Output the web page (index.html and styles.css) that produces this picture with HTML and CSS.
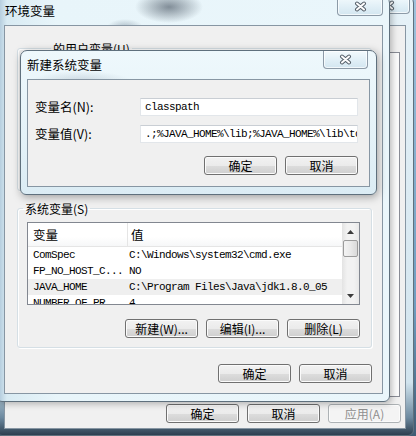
FILE: index.html
```html
<!DOCTYPE html>
<html lang="zh-CN">
<head>
  <meta charset="UTF-8" />
  <title>环境变量</title>
  <link rel="stylesheet" href="styles.css">
</head>
<body>
  <!-- 系统属性 (behind) -->
  <div class="win win-bg">
    <div class="titlebar">
      <span class="title">系统属性</span>
      <span class="close close-bg">
        <svg width="13" height="11" viewBox="0 0 13 11"><path class="x-out" d="M3 2.5 L10 8.5 M10 2.5 L3 8.5"/><path class="x-in" d="M3 2.5 L10 8.5 M10 2.5 L3 8.5"/></svg>
      </span>
    </div>
    <div class="client bg-client">
      <div class="tabpanel"></div>
      <div class="btnrow">
        <button class="btn">确定</button>
        <button class="btn">取消</button>
        <button class="btn" disabled>应用(A)</button>
      </div>
    </div>
  </div>

  <!-- 环境变量 -->
  <div class="win win-env">
    <div class="titlebar">
      <span class="title">环境变量</span>
      <span class="close close-env">
        <svg width="13" height="11" viewBox="0 0 13 11"><path class="x-out" d="M3 2.5 L10 8.5 M10 2.5 L3 8.5"/><path class="x-in" d="M3 2.5 L10 8.5 M10 2.5 L3 8.5"/></svg>
      </span>
    </div>
    <div class="client env-client">
      <fieldset class="group group-user">
        <legend class="legend-user">的用户变量(U)</legend>
      </fieldset>

      <fieldset class="group group-sys">
        <legend>系统变量(S)</legend>
        <div class="listview">
          <div class="lv-main">
            <div class="lv-head">
              <div class="col1">变量</div>
              <div class="col2">值</div>
            </div>
            <div class="lv-row"><div class="col1">ComSpec</div><div class="col2">C:\Windows\system32\cmd.exe</div></div>
            <div class="lv-row"><div class="col1">FP_NO_HOST_C...</div><div class="col2">NO</div></div>
            <div class="lv-row hot"><div class="col1">JAVA_HOME</div><div class="col2">C:\Program Files\Java\jdk1.8.0_05</div></div>
            <div class="lv-row"><div class="col1">NUMBER_OF_PR...</div><div class="col2">4</div></div>
          </div>
          <div class="scrollbar">
            <div class="sb-arrow"><svg width="7" height="4" viewBox="0 0 7 4"><path d="M0 4 L3.5 0 L7 4 Z"/></svg></div>
            <div class="sb-thumb"></div>
            <div class="sb-track"></div>
            <div class="sb-arrow"><svg width="7" height="4" viewBox="0 0 7 4"><path d="M0 0 L3.5 4 L7 0 Z"/></svg></div>
          </div>
        </div>
        <div class="btnrow grp-btns">
          <button class="btn">新建(W)...</button>
          <button class="btn">编辑(I)...</button>
          <button class="btn">删除(L)</button>
        </div>
      </fieldset>

      <div class="btnrow env-btns">
        <button class="btn">确定</button>
        <button class="btn">取消</button>
      </div>
    </div>
  </div>

  <!-- 新建系统变量 (active) -->
  <div class="win win-new">
    <div class="titlebar">
      <span class="title">新建系统变量</span>
      <span class="close close-new">
        <svg width="13" height="11" viewBox="0 0 13 11"><path class="x-out" d="M3 2.5 L10 8.5 M10 2.5 L3 8.5"/><path class="x-in" d="M3 2.5 L10 8.5 M10 2.5 L3 8.5"/></svg>
      </span>
    </div>
    <div class="client new-client">
      <div class="form">
        <label>变量名(N):</label>
        <div class="textbox">classpath</div>
        <label>变量值(V):</label>
        <div class="textbox">.;%JAVA_HOME%\lib;%JAVA_HOME%\lib\tools.jar</div>
      </div>
      <div class="btnrow new-btns">
        <button class="btn">确定</button>
        <button class="btn">取消</button>
      </div>
    </div>
  </div>
</body>
</html>
```

FILE: styles.css
```css
* {
  box-sizing: border-box;
}

body {
  margin: 0;
  width: 416px;
  height: 436px;
  overflow: hidden;
  position: relative;
  font-family: "Noto Sans CJK SC", "Noto Sans", sans-serif;
  font-size: 12px;
  color: #000;
  background: linear-gradient(180deg, #9fc2dc 0%, #6f9dc0 70%, #3f5c74 100%);
}

/* ---- windows ---- */
.win {
  position: absolute;
  display: flex;
  flex-direction: column;
  border: 1px solid #5f707d;
  border-radius: 7px 7px 6px 6px;
  background:
    radial-gradient(ellipse 40px 14px at 170px 12px, rgba(70, 85, 100, 0.55), transparent),
    linear-gradient(180deg, #eef8fc 0%, #e2f1f8 40%, #d6e8f1 100%);
}

.win-bg {
  left: -4px;
  top: -4px;
  width: 418px;
  height: 440px;
  background: linear-gradient(180deg, #e6f2f8 0%, #d2e4ee 88%, #6d8aa0 96%, #2d3f50 100%);
}

.win-env {
  left: -4px;
  top: -4px;
  width: 394px;
  height: 406px;
  box-shadow: 2px 2px 6px rgba(0, 0, 0, 0.25);
  background:
    radial-gradient(ellipse 34px 16px at 172px 10px, rgba(60, 72, 86, 0.6), transparent),
    radial-gradient(ellipse 18px 8px at 128px 30px, rgba(70, 90, 110, 0.35), transparent),
    linear-gradient(90deg, #a8c2d6 0px, #d9ebf3 10px, #e8f5fa 60px, #eaf6fb 100%);
}

.win-new {
  left: 20px;
  top: 50px;
  width: 357px;
  height: 145px;
  box-shadow: 1px 2px 8px rgba(0, 0, 0, 0.35);
  background:
    radial-gradient(ellipse 50px 10px at 60px 30px, rgba(110, 130, 150, 0.25), transparent),
    linear-gradient(180deg, #eef8fc 0%, #e4f2f8 60%, #dbecf4 100%);
}

.titlebar {
  height: 28px;
  flex: none;
  display: flex;
  justify-content: space-between;
  align-items: flex-start;
}

.title {
  margin-top: 6px;
  line-height: 16px;
  font-size: 12.5px;
  color: #000;
}

.win-env .title {
  padding-left: 8px;
}

.win-new .title {
  padding-left: 6px;
}

.win-bg .title {
  padding-left: 8px;
}

.close {
  display: flex;
  align-items: center;
  justify-content: center;
  height: 19px;
  border: 1px solid #8c9aa7;
  border-top: none;
  border-radius: 0 0 4px 4px;
  background: linear-gradient(180deg, #f3fafd 0%, #e2f0f7 50%, #d3e6f0 100%);
  box-shadow: inset 0 0 0 1px rgba(255, 255, 255, 0.7);
}

.close-env {
  width: 46px;
  margin-right: 6px;
}

.close-new {
  width: 45px;
  height: 18px;
  margin-right: 8px;
}

.close-bg {
  width: 43px;
  height: 17px;
  margin-right: 3px;
}

.x-out {
  fill: none;
  stroke: #56606a;
  stroke-width: 4;
  stroke-linecap: round;
}

.x-in {
  fill: none;
  stroke: #fdfdfd;
  stroke-width: 2;
  stroke-linecap: round;
}

.client {
  flex: 1;
  display: flex;
  flex-direction: column;
  background: #f0f0f0;
  border: 1px solid #8796a3;
}

.bg-client {
  margin: 0 7px 6px 7px;
}

.env-client {
  margin: 0 6px 7px 7px;
  padding: 0 10px 10px 12px;
}

.new-client {
  margin: 0 6px 7px 6px;
  padding: 18px 11px 11px 7px;
}

/* ---- buttons ---- */
.btnrow {
  display: flex;
  justify-content: flex-end;
  gap: 8px;
}

.btn {
  width: 73px;
  height: 19px;
  padding: 0;
  border: 1px solid #707070;
  border-radius: 3px;
  background: linear-gradient(180deg, #f2f2f2 0%, #ebebeb 50%, #dddddd 50%, #cfcfcf 100%);
  box-shadow: inset 0 0 0 1px #fbfbfb;
  font-family: "Noto Sans CJK SC", "Noto Sans", sans-serif;
  font-size: 12px;
  line-height: 16px;
  color: #000;
}

.btn:disabled {
  border-color: #adb2b5;
  background: #f4f4f4;
  color: #8f8f8f;
}

.bg-client .btnrow {
  padding: 0 4px 5px 0;
  margin-top: 7px;
}

.tabpanel {
  flex: 1;
  margin: 26px 5px 0 5px;
  border: 1px solid #898c95;
  background: #fbfbfb;
}

/* ---- group boxes ---- */
.group {
  margin: 0;
  border: 1px solid #d5dfe5;
  border-radius: 3px;
  box-shadow: inset 1px 1px 0 #fff, 1px 1px 0 #fff;
  padding: 6px 11px 9px 9px;
}

.group legend {
  margin-left: -4px;
  padding: 0 2px;
  line-height: 15px;
  font-size: 12px;
}

.group-user {
  margin-top: 15px;
  height: 150px;
}

.group .legend-user {
  margin-left: 24px;
}

.group-sys {
  margin-top: 10px;
}

.grp-btns {
  margin-top: 14px;
}

.env-btns {
  margin-top: 16px;
}

/* ---- list view ---- */
.listview {
  display: flex;
  height: 83px;
  border: 1px solid #828790;
  background: #fff;
  overflow: hidden;
}

.lv-main {
  flex: 1;
  overflow: hidden;
}

.lv-head {
  display: flex;
  height: 24px;
  border-bottom: 1px solid #e5e5e5;
  background: linear-gradient(180deg, #ffffff 0%, #ffffff 60%, #f6f7f8 100%);
  line-height: 23px;
  font-size: 12.5px;
}

.lv-head .col1 {
  width: 100px;
  padding-left: 5px;
  border-right: 1px solid #e5e5e5;
}

.lv-head .col2 {
  padding-left: 3px;
}

.lv-row {
  display: flex;
  height: 16px;
  line-height: 16px;
  font-family: "Liberation Mono", monospace;
  font-size: 11px;
  letter-spacing: -0.6px;
  white-space: nowrap;
}

.lv-row.hot {
  background: #efefef;
}

.lv-row .col1 {
  width: 100px;
  padding-left: 5px;
  flex: none;
  overflow: hidden;
}

.lv-row .col2 {
  padding-left: 1px;
}

.scrollbar {
  width: 17px;
  display: flex;
  flex-direction: column;
  background: linear-gradient(90deg, #e3e3e3 0%, #f2f2f2 30%, #f2f2f2 70%, #e8e8e8 100%);
}

.sb-arrow {
  height: 17px;
  display: flex;
  align-items: center;
  justify-content: center;
}

.sb-arrow path {
  fill: #3c3c3c;
}

.sb-thumb {
  height: 17px;
  margin: 0 1px;
  border: 1px solid #9b9b9b;
  border-radius: 2px;
  background: linear-gradient(90deg, #f3f3f3 0%, #e9e9e9 50%, #d9d9d9 100%);
}

.sb-track {
  flex: 1;
}

/* ---- new variable dialog ---- */
.form {
  display: grid;
  grid-template-columns: 105px 1fr;
  row-gap: 9px;
  align-items: center;
}

.form label {
  font-size: 12.5px;
  line-height: 18px;
}

.textbox {
  height: 18px;
  border: 1px solid #e2e6ea;
  border-top-color: #c9ced4;
  background: #fff;
  padding-left: 4px;
  font-family: "Liberation Mono", monospace;
  font-size: 11px;
  letter-spacing: -0.6px;
  line-height: 16px;
  white-space: nowrap;
  overflow: hidden;
}

.new-btns {
  margin-top: 13px;
}
```
